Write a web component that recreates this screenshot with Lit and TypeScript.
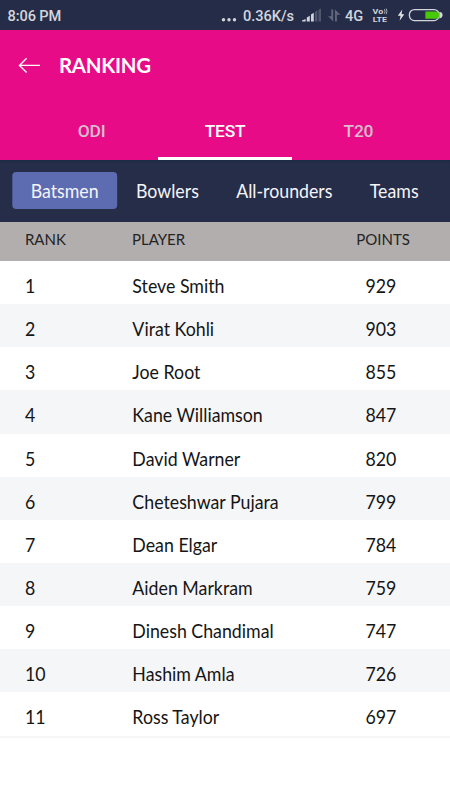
import { LitElement, html, css } from "lit";
import { customElement, state } from "lit/decorators.js";
import { classMap } from "lit/directives/class-map.js";

@customElement("status-bar")
class StatusBar extends LitElement {
  static styles = css`
    :host { display: flex; height: 30px; background: #252c48; color: #d3d5dc;
      font: 500 14.6px/30px Roboto, sans-serif; box-sizing: border-box; padding: 1px 0 0 7.5px; }
    .time { width: 213.5px; letter-spacing: -0.1px; }
    .speed { width: 59px; letter-spacing: -0.05px; }
    .net { width: 26px; }
    .dots { width: 22px; height: 29px; }
    .signal { width: 43px; height: 29px; }
    .right { width: 79px; height: 29px; }
    svg { display: block; flex: none; }
    .lte { font: 700 7.6px Roboto, sans-serif; fill: #d3d5dc; }
  `;
  render() {
    return html`
      <span class="time">8:06 PM</span>
      <svg class="dots" viewBox="221 1 22 29" fill="#d3d5dc">
        <circle cx="223.5" cy="19.7" r="1.7"/><circle cx="229" cy="19.7" r="1.7"/><circle cx="234.5" cy="19.7" r="1.7"/>
      </svg>
      <span class="speed">0.36K/s</span>
      <svg class="signal" viewBox="302 1 43 29" fill="#d3d5dc">
        <path d="M302 21.5V20.6L305.6 19V21.5ZM306.8 21.5V17.5L309.8 15.8V21.5ZM311 21.5V14.5L313.8 12.8V21.5Z"/>
        <path opacity=".25" d="M314.9 21.5V11.7L317.4 10.2V21.5ZM318.5 21.5V9.8L321 8.5V21.5Z"/>
        <path opacity=".35" d="M331.3 9.5H333.2V21.5L328 16.2H331.3ZM335 21.5V9.5L340.4 14.8H336.9V21.5Z"/>
      </svg>
      <span class="net">4G</span>
      <svg class="right" viewBox="371 1 79 29">
        <text class="lte" x="372.6" y="14.2" textLength="10.6" lengthAdjust="spacingAndGlyphs">Vo</text>
        <path d="M384.4 9.2q1.3 2.2 0 4.5M386.2 8.6q1.5 2.8 0 5.6" fill="none" stroke="#a9adb9" stroke-width="1"/>
        <text class="lte" x="372.8" y="22.2" textLength="14.2" lengthAdjust="spacingAndGlyphs">LTE</text>
        <path d="M402.3 9.6L397.8 15.7H400.6L399.6 20.8L404.3 14.2H401.5Z" fill="#e4e5e9"/>
        <rect x="409.4" y="9.6" width="29.6" height="11" rx="5" fill="none" stroke="#d3d5dc" stroke-width="1.3"/>
        <path d="M439.4 11.8Q442.6 12.3 442.6 15.1T439.4 18.4Z" fill="#d3d5dc"/>
        <path d="M425.4 11.4H435.6Q439.3 11.4 439.3 15.1T435.6 18.8H425.4Z" fill="#48c908"/>
      </svg>`;
  }
}

@customElement("app-root")
class AppRoot extends LitElement {
  @state() private format = "TEST";
  @state() private category = "Batsmen";

  private players: [string, number][] = [
    ["Steve Smith", 929], ["Virat Kohli", 903], ["Joe Root", 855],
    ["Kane Williamson", 847], ["David Warner", 820], ["Cheteshwar Pujara", 799],
    ["Dean Elgar", 784], ["Aiden Markram", 759], ["Dinesh Chandimal", 747],
    ["Hashim Amla", 726], ["Ross Taylor", 697],
  ];

  /* The .narrow blocks are laid out wide and condensed to 94.5% of their width. */
  static styles = css`
    :host { display: block; width: 450px; height: 800px; overflow: hidden; background: #fff;
      font-family: Lato, sans-serif; color: #151515; }
    .narrow { box-sizing: border-box; width: calc(100% / 0.945 + 2px); transform: scaleX(0.945); transform-origin: 0 0; }
    .header { height: 130px; background: #e80b87; display: flex; flex-direction: column; }
    .title { height: 71px; display: flex; align-items: center; color: #fff; padding-left: 18px; }
    .title svg { width: 23px; height: 18px; margin-right: 18px; }
    h1 { margin: -2px 0 0; font-size: 20.4px; font-weight: 700; line-height: 24px; letter-spacing: -0.25px; }
    .formats { height: 59px; display: grid; grid-template-columns: repeat(3, 133.4px); justify-content: center; }
    .format { box-sizing: border-box; border-bottom: 3px solid transparent; text-align: center;
      font: 500 17.4px/60px Roboto, sans-serif; letter-spacing: -0.25px; color: #dbbdce; height: 59px; }
    .format.on { color: #fff; border-color: #fff; }
    .categories { height: 61.5px; background: linear-gradient(#1b2a41, #262d49 4px);
      display: flex; align-items: center; padding-left: 12.7px; color: #f4f4f7; }
    .category { height: 37px; padding: 0 19.75px; border-radius: 4.2px / 4px;
      font-size: 18.8px; line-height: 38px; white-space: nowrap; }
    .category.on { background: #5d6bb0; }
    .row { display: grid; grid-template-columns: 113.7px 246.6px 80px; padding-left: 26.4px;
      height: 43.15px; line-height: 50.4px; font-size: 18.8px; }
    .row:nth-child(even) { background: #f5f6f8; }
    .head { height: 39.5px; line-height: 34px; font-size: 15.9px; background: #b2aeae; color: #242424;
      display: grid; grid-template-columns: 113.2px 237.4px 90px; padding-left: 26.4px; }
    .end { height: 2px; background: #f5f6f8; }
  `;

  render() {
    return html`
      <status-bar></status-bar>
      <div class="header">
        <div class="title">
          <svg viewBox="0 0 23 18" fill="none" stroke="#fff" stroke-width="1.4"><path d="M8.6 1.3L1.5 8.4L8.6 15.5M1.5 8.4H22"/></svg>
          <h1>RANKING</h1>
        </div>
        <div class="formats">
          ${["ODI", "TEST", "T20"].map((f) => html`<div class=${classMap({ format: true, on: f === this.format })} @click=${() => (this.format = f)}>${f}</div>`)}
        </div>
      </div>
      <div class="categories narrow">
        ${["Batsmen", "Bowlers", "All-rounders", "Teams"].map((c) => html`<div class=${classMap({ category: true, on: c === this.category })} @click=${() => (this.category = c)}>${c}</div>`)}
      </div>
      <div class="head narrow"><span>RANK</span><span>PLAYER</span><span>POINTS</span></div>
      <div class="narrow">
        ${this.players.map(([name, points], i) => html`<div class="row"><span>${i + 1}</span><span>${name}</span><span>${points}</span></div>`)}
      </div>
      <div class="end"></div>`;
  }
}
